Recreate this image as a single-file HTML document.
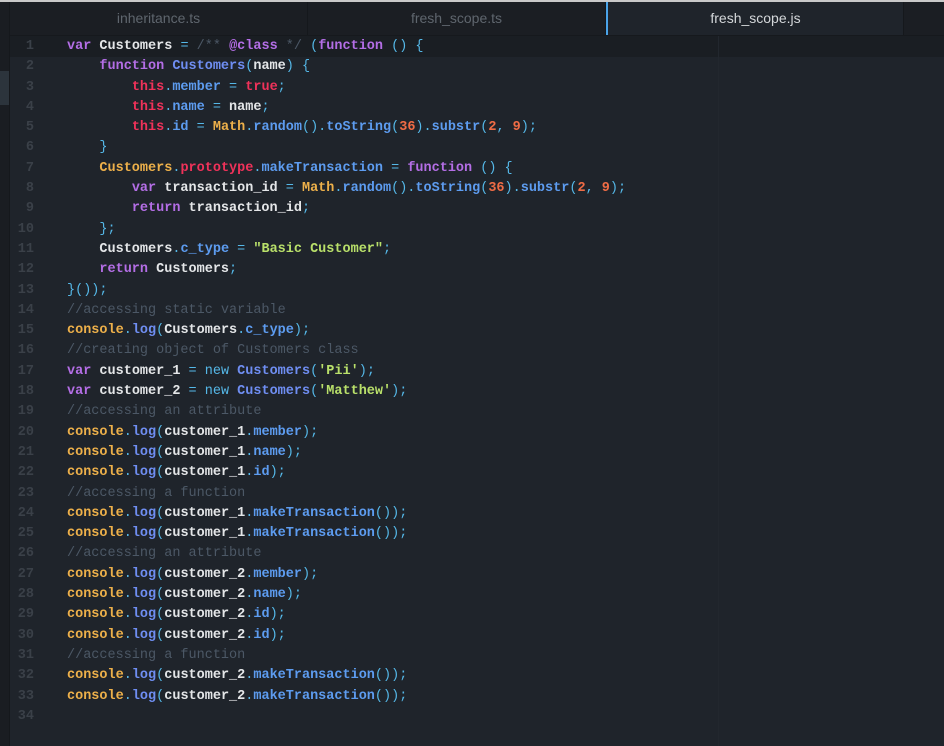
<!DOCTYPE html>
<html><head><meta charset="utf-8"><style>
html,body{margin:0;padding:0;width:944px;height:746px;overflow:hidden;background:#1f242b;}
.top{position:absolute;left:0;top:0;width:944px;height:2px;background:#c9c9c9;}
.strip{position:absolute;left:0;top:2px;width:9px;height:744px;background:#1a1d22;border-right:1px solid #15181c;}
.sel{position:absolute;left:0;top:71px;width:9px;height:34px;background:#2c343c;}
.tabs{position:absolute;left:10px;top:2px;width:934px;height:33px;background:#1b1e23;border-bottom:1px solid #16191d;}
.tab{position:absolute;top:0;height:33px;font:14px "Liberation Sans",sans-serif;line-height:33px;text-align:center;color:#5f666e;border-right:1px solid #15181c;}
.tab.act{background:#1f242b;color:#d4d7da;border-left:2px solid #4aa3e8;}
.guide{position:absolute;left:718px;top:36px;width:1px;height:710px;background:#22272e;}
.cur{position:absolute;left:10px;top:36px;width:934px;height:21px;background:#1a1e23;}
.code{position:absolute;left:10px;top:37px;font:bold 13.5px/20.3px "Liberation Mono",monospace;color:#e4e6e8;white-space:pre;}
.ln{display:inline-block;width:24px;text-align:right;color:#3a4048;margin-right:33px;}
.k{color:#b46ee6}.f{color:#6f8ef2}.t{color:#f0325a}.y{color:#edb04a}.n{color:#f06c45}.s{color:#b9e06a}.c{color:#4c5866;font-weight:normal}.p{color:#55b8e8;font-weight:normal}.m{color:#5d9cf0}.w{color:#e4e6e8}
</style></head><body>
<div class="top"></div>
<div class="strip"></div><div class="sel"></div>
<div class="tabs">
<div class="tab" style="left:0;width:297px;">inheritance.ts</div>
<div class="tab" style="left:298px;width:297px;">fresh_scope.ts</div>
<div class="tab act" style="left:596px;width:295px;">fresh_scope.js</div>
</div>
<div class="cur"></div>
<div class="guide"></div>
<div class="code"><span class="ln">1</span><span class="k">var</span> Customers <span class="p">=</span> <span class="c">/** </span><span class="k">@class</span><span class="c"> */</span> <span class="p">(</span><span class="k">function</span> <span class="p">() {</span>
<span class="ln">2</span>    <span class="k">function</span> <span class="f">Customers</span><span class="p">(</span>name<span class="p">) {</span>
<span class="ln">3</span>        <span class="t">this</span><span class="p">.</span><span class="m">member</span> <span class="p">=</span> <span class="t">true</span><span class="p">;</span>
<span class="ln">4</span>        <span class="t">this</span><span class="p">.</span><span class="m">name</span> <span class="p">=</span> name<span class="p">;</span>
<span class="ln">5</span>        <span class="t">this</span><span class="p">.</span><span class="m">id</span> <span class="p">=</span> <span class="y">Math</span><span class="p">.</span><span class="m">random</span><span class="p">().</span><span class="m">toString</span><span class="p">(</span><span class="n">36</span><span class="p">).</span><span class="m">substr</span><span class="p">(</span><span class="n">2</span><span class="p">,</span> <span class="n">9</span><span class="p">);</span>
<span class="ln">6</span>    <span class="p">}</span>
<span class="ln">7</span>    <span class="y">Customers</span><span class="p">.</span><span class="t">prototype</span><span class="p">.</span><span class="m">makeTransaction</span> <span class="p">=</span> <span class="k">function</span> <span class="p">() {</span>
<span class="ln">8</span>        <span class="k">var</span> transaction_id <span class="p">=</span> <span class="y">Math</span><span class="p">.</span><span class="m">random</span><span class="p">().</span><span class="m">toString</span><span class="p">(</span><span class="n">36</span><span class="p">).</span><span class="m">substr</span><span class="p">(</span><span class="n">2</span><span class="p">,</span> <span class="n">9</span><span class="p">);</span>
<span class="ln">9</span>        <span class="k">return</span> transaction_id<span class="p">;</span>
<span class="ln">10</span>    <span class="p">};</span>
<span class="ln">11</span>    Customers<span class="p">.</span><span class="m">c_type</span> <span class="p">=</span> <span class="s">"Basic Customer"</span><span class="p">;</span>
<span class="ln">12</span>    <span class="k">return</span> Customers<span class="p">;</span>
<span class="ln">13</span><span class="p">}());</span>
<span class="ln">14</span><span class="c">//accessing static variable</span>
<span class="ln">15</span><span class="y">console</span><span class="p">.</span><span class="f">log</span><span class="p">(</span>Customers<span class="p">.</span><span class="m">c_type</span><span class="p">);</span>
<span class="ln">16</span><span class="c">//creating object of Customers class</span>
<span class="ln">17</span><span class="k">var</span> customer_1 <span class="p">=</span> <span class="p">new</span> <span class="f">Customers</span><span class="p">(</span><span class="s">'Pii'</span><span class="p">);</span>
<span class="ln">18</span><span class="k">var</span> customer_2 <span class="p">=</span> <span class="p">new</span> <span class="f">Customers</span><span class="p">(</span><span class="s">'Matthew'</span><span class="p">);</span>
<span class="ln">19</span><span class="c">//accessing an attribute</span>
<span class="ln">20</span><span class="y">console</span><span class="p">.</span><span class="f">log</span><span class="p">(</span>customer_1<span class="p">.</span><span class="m">member</span><span class="p">);</span>
<span class="ln">21</span><span class="y">console</span><span class="p">.</span><span class="f">log</span><span class="p">(</span>customer_1<span class="p">.</span><span class="m">name</span><span class="p">);</span>
<span class="ln">22</span><span class="y">console</span><span class="p">.</span><span class="f">log</span><span class="p">(</span>customer_1<span class="p">.</span><span class="m">id</span><span class="p">);</span>
<span class="ln">23</span><span class="c">//accessing a function</span>
<span class="ln">24</span><span class="y">console</span><span class="p">.</span><span class="f">log</span><span class="p">(</span>customer_1<span class="p">.</span><span class="m">makeTransaction</span><span class="p">());</span>
<span class="ln">25</span><span class="y">console</span><span class="p">.</span><span class="f">log</span><span class="p">(</span>customer_1<span class="p">.</span><span class="m">makeTransaction</span><span class="p">());</span>
<span class="ln">26</span><span class="c">//accessing an attribute</span>
<span class="ln">27</span><span class="y">console</span><span class="p">.</span><span class="f">log</span><span class="p">(</span>customer_2<span class="p">.</span><span class="m">member</span><span class="p">);</span>
<span class="ln">28</span><span class="y">console</span><span class="p">.</span><span class="f">log</span><span class="p">(</span>customer_2<span class="p">.</span><span class="m">name</span><span class="p">);</span>
<span class="ln">29</span><span class="y">console</span><span class="p">.</span><span class="f">log</span><span class="p">(</span>customer_2<span class="p">.</span><span class="m">id</span><span class="p">);</span>
<span class="ln">30</span><span class="y">console</span><span class="p">.</span><span class="f">log</span><span class="p">(</span>customer_2<span class="p">.</span><span class="m">id</span><span class="p">);</span>
<span class="ln">31</span><span class="c">//accessing a function</span>
<span class="ln">32</span><span class="y">console</span><span class="p">.</span><span class="f">log</span><span class="p">(</span>customer_2<span class="p">.</span><span class="m">makeTransaction</span><span class="p">());</span>
<span class="ln">33</span><span class="y">console</span><span class="p">.</span><span class="f">log</span><span class="p">(</span>customer_2<span class="p">.</span><span class="m">makeTransaction</span><span class="p">());</span>
<span class="ln">34</span>
</div>
</body></html>
